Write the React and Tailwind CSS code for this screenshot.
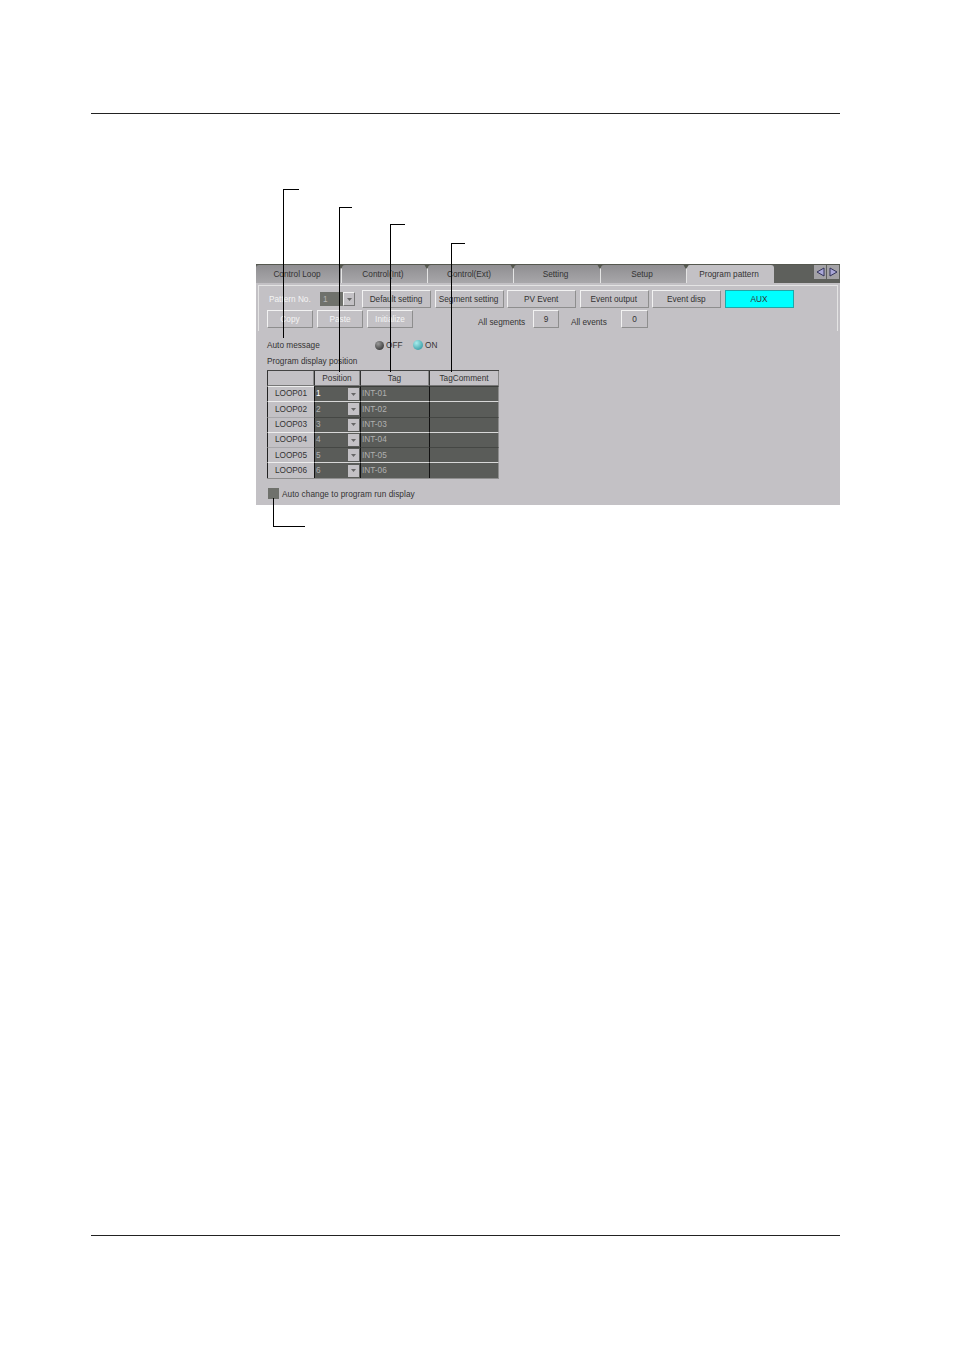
import React from "react";

const tabs = [
  { name: "Control Loop", w: "w-[86px]" },
  { name: "Control(Int)", w: "w-[86px]" },
  { name: "Control(Ext)", w: "w-[86px]" },
  { name: "Setting", w: "w-[87px]" },
  { name: "Setup", w: "w-[86px]" },
];

const topButtons = ["Default setting", "Segment setting", "PV Event", "Event output", "Event disp"];

// rows are paired off by a light rule, the rest get a dark one
const loops = [
  { n: 1, rule: "border-t-[#3d3f3c]", head: "border-t-[#eee]" },
  { n: 2, rule: "border-t-[#d8d8d8]", head: "border-t-[#eee]" },
  { n: 3, rule: "border-t-[#454744]", head: "border-t-[#a9a8ab]" },
  { n: 4, rule: "border-t-[#d8d8d8]", head: "border-t-[#eee]" },
  { n: 5, rule: "border-t-[#454744]", head: "border-t-[#a9a8ab]" },
  { n: 6, rule: "border-t-[#d8d8d8]", head: "border-t-[#eee]" },
];

function Callout({ className }) {
  return <div className={`absolute bg-black ${className}`} />;
}

function Notch() {
  return (
    <svg className="absolute -right-[3px] -top-px" width="6" height="5" viewBox="0 0 6 5">
      <path d="M0 0H6L3.5 4.5H2.5Z" fill="#55584f" />
    </svg>
  );
}

function Caret() {
  return (
    <svg width="5" height="3" viewBox="0 0 5 3">
      <path d="M0 0H5L2.5 3Z" fill="#666" />
    </svg>
  );
}

export default function App() {
  return (
    <div className="relative h-[1350px] w-[954px] bg-white pt-[113px] font-['Liberation_Sans',Arial,sans-serif] text-[8.25px] text-[#333]">
      <div className="ml-[91px] h-px w-[749px] bg-[#222]" />

      <div className="ml-[256px] mt-[150px] h-[241px] w-[584px] bg-[#c3c1c5]">
        {/* tab strip */}
        <div className="flex h-[19px] border-t border-[#55584f] bg-[#5e605c]">
          {tabs.map((t) => (
            <div
              key={t.name}
              className={`relative flex items-center justify-center rounded-tl-[3px] border-r border-[#e4e4e4] bg-gradient-to-b from-[#8f8e91] to-[#a8a7aa] pr-[3px] pt-[2px] ${t.w}`}
            >
              {t.name}
              <Notch />
            </div>
          ))}
          <div className="flex w-[87px] items-center justify-center rounded-t-[3px] bg-[#c3c1c5] pr-[3px] pt-[2px]">Program pattern</div>
          <div className="ml-auto mr-[1px] flex h-[14px] gap-px">
            <div className="flex w-[12px] items-center justify-center bg-[#a3a2a6]">
              <svg width="9" height="10" viewBox="0 0 9 10">
                <path d="M8 1V9L1 5Z" fill="#aaa8d8" stroke="#33335a" />
              </svg>
            </div>
            <div className="flex w-[12px] items-center justify-center bg-[#a3a2a6]">
              <svg width="9" height="10" viewBox="0 0 9 10">
                <path d="M1 1V9L8 5Z" fill="#aaa8d8" stroke="#33335a" />
              </svg>
            </div>
          </div>
        </div>

        {/* tab page */}
        <div className="mx-[2px] mt-[2px] h-[46px] w-[580px] border-l border-r border-t border-[#e4e4e4]">
          <div className="ml-[10px] mt-[4px] flex h-[18px] items-center">
            <span className="mt-[2px] w-[51px] text-[#f4f4f4]">Pattern No.</span>
            <div className="flex h-[14px] w-[35px]">
              <div className="flex w-[23px] items-center bg-[#6f716c] pl-[3px] pt-[2px] text-[#b5b5b5]">1</div>
              <div className="flex w-[12px] items-center justify-center border border-[#f2f2f2] border-b-[#777] border-r-[#777] bg-[#c3c1c5]">
                <Caret />
              </div>
            </div>
            <div className="ml-[7px] flex gap-[3.6px]">
              {topButtons.map((b) => (
                <div
                  key={b}
                  className="flex h-[18px] w-[69px] items-center justify-center border border-[#f2f2f2] border-b-[#8e8e8e] border-r-[#8e8e8e] pr-px pt-[2px]"
                >
                  {b}
                </div>
              ))}
              <div className="flex h-[18px] w-[69px] items-center justify-center border border-[#1fa8a8] bg-[#00ffff] pr-px pt-[2px]">AUX</div>
            </div>
          </div>
          <div className="ml-[8px] mt-[2px] flex h-[18px] items-center">
            {["Copy", "Paste", "Initialize"].map((b) => (
              <div
                key={b}
                className="mr-1 flex h-[18px] w-[46px] items-center justify-center border border-[#f2f2f2] border-b-[#8e8e8e] border-r-[#8e8e8e] pt-[2px] text-[#f4f4f4]"
              >
                {b}
              </div>
            ))}
            <span className="ml-[61px] mt-[8px] w-[55px]">All segments</span>
            <div className="flex h-[18px] w-[26px] items-center justify-center border border-[#f2f2f2] border-b-[#8e8e8e] border-r-[#8e8e8e] pt-[2px]">9</div>
            <span className="ml-[12px] mt-[8px] w-[50px]">All events</span>
            <div className="flex h-[18px] w-[27px] items-center justify-center border border-[#f2f2f2] border-b-[#8e8e8e] border-r-[#8e8e8e] pt-[2px]">0</div>
          </div>
        </div>

        {/* auto message */}
        <div className="ml-[11px] mt-[8px] flex h-[12px] items-center">
          <span className="mt-[2px] w-[108px]">Auto message</span>
          <span className="h-[9px] w-[9px] rounded-full bg-[radial-gradient(circle_at_35%_30%,#999,#222)]" />
          <span className="ml-[2px] mt-[2px] w-[27px]">OFF</span>
          <span className="h-[10px] w-[10px] rounded-full bg-[radial-gradient(circle_at_35%_30%,#a8ecec,#1e8c96)]" />
          <span className="ml-[2px] mt-[2px]">ON</span>
        </div>
        <div className="ml-[11px] mt-[5px] h-[12px] leading-[12px]">Program display position</div>

        {/* position table */}
        <div className="ml-[11px] mt-[2px] w-[232px] border-b border-[#8e8e8e]">
          <div className="grid h-[16px] grid-cols-[47px_46px_69px_70px] border-t border-[#444]">
            {["", "Position", "Tag", "TagComment"].map((h, i) => (
              <div
                key={i}
                className="flex items-center justify-center border-b border-l border-r border-b-[#777] border-l-[#333] border-r-[#888] bg-[#c3c1c5] pt-[2px]"
              >
                {h}
              </div>
            ))}
          </div>
          {loops.map(({ n, rule, head }) => (
            <div key={n} className="grid h-[15.3px] grid-cols-[47px_46px_69px_70px] text-[#b0b0b0]">
              <div className={`flex items-center justify-center border-l border-t border-l-[#222] bg-[#c3c1c5] pt-px text-[#333] ${head}`}>
                LOOP0{n}
              </div>
              <div className={`flex items-center justify-between border-l border-t border-l-[#111] bg-[#5a5c59] pl-[1px] ${rule}`}>
                <span className={`pt-px ${n === 1 ? "text-white" : ""}`}>{n}</span>
                <div className="mr-[1px] flex h-[12px] w-[11px] items-center justify-center bg-[#c3c1c5]">
                  <Caret />
                </div>
              </div>
              <div className={`flex items-center border-l border-t border-l-[#111] bg-[#5a5c59] pl-[1px] pt-px ${rule}`}>INT-0{n}</div>
              <div className={`border-l border-r border-t border-l-[#111] border-r-[#8e8e8e] bg-[#5a5c59] ${rule}`} />
            </div>
          ))}
        </div>

        <div className="ml-[12px] mt-[9px] flex h-[12px] items-center">
          <span className="h-[11px] w-[11px] bg-[#6f716c]" />
          <span className="ml-[3px] mt-[2px] tracking-[0.06px]">Auto change to program run display</span>
        </div>
      </div>

      <div className="ml-[91px] mt-[730px] h-px w-[749px] bg-[#222]" />

      {/* callout lines */}
      <Callout className="left-[283px] top-[189px] h-[149px] w-px" />
      <Callout className="left-[283px] top-[189px] h-px w-[16px]" />
      <Callout className="left-[339px] top-[207px] h-[165px] w-px" />
      <Callout className="left-[339px] top-[207px] h-px w-[13px]" />
      <Callout className="left-[390px] top-[224px] h-[148px] w-px" />
      <Callout className="left-[390px] top-[224px] h-px w-[15px]" />
      <Callout className="left-[451px] top-[243px] h-[129px] w-px" />
      <Callout className="left-[451px] top-[243px] h-px w-[14px]" />
      <Callout className="left-[273px] top-[498px] h-[28px] w-px" />
      <Callout className="left-[273px] top-[526px] h-px w-[32px]" />
    </div>
  );
}
